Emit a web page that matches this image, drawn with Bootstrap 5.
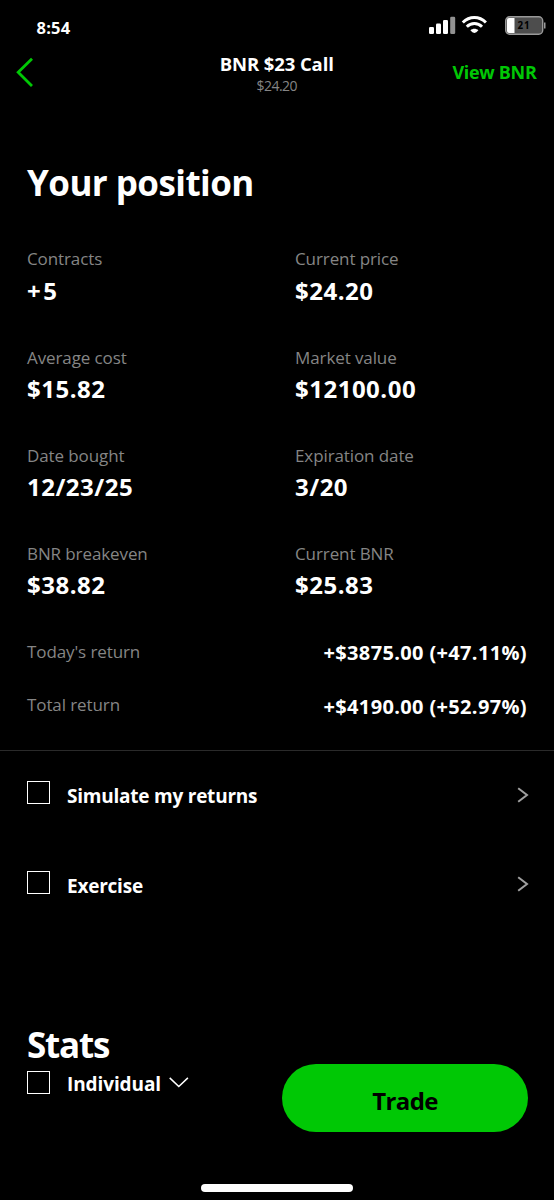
<!DOCTYPE html>
<html lang="en">
<head>
<meta charset="utf-8">
<meta name="viewport" content="width=device-width, initial-scale=1">
<title>BNR $23 Call</title>
<link href="https://cdn.jsdelivr.net/npm/bootstrap@5.3.0/dist/css/bootstrap.min.css" rel="stylesheet">
<style>
body{background:#000;color:#fff;font-family:"Open Sans","Noto Sans",sans-serif;font-weight:700}
svg{display:block;flex:none}
.screen{width:554px;height:1200px;overflow:hidden}
.status{height:46px;padding:0 8px 0 36.5px}
.clock{font-size:16.5px;line-height:26px;letter-spacing:.2px;margin-top:14.5px}
.signals{margin-top:15px}
.topbar{display:grid;grid-template-columns:1fr auto 1fr;height:60px;padding:0 17.500px 0 16px}
.back{margin-top:10.5px}
.title{font-size:18.5px;line-height:26px;letter-spacing:-.1px;margin-top:4.8px;padding-left:1px}
.quote{font-size:14px;line-height:18px;font-weight:400;color:#858585;letter-spacing:-.5px;padding-left:1px;margin-top:.2px}
.view{font-size:18px;line-height:26px;letter-spacing:-.3px;margin-top:13px;color:#00c805}
.content{padding:0 27px}
.big{font-size:35px;line-height:44px;letter-spacing:-.55px}
.heading{margin-top:55.400px}
.stats .big{letter-spacing:-1.2px}
.lab{font-size:17px;line-height:24px;font-weight:400;color:#858585;letter-spacing:-.1px}
.val{font-size:24px;line-height:34px;margin-top:2.3px;letter-spacing:.5px}
.plus{letter-spacing:2.5px}
.facts{display:grid;grid-template-columns:268px 1fr;row-gap:37.9px;margin-top:42px}
.returns{margin-top:22.4px;padding-bottom:17.4px;border-bottom:1px solid #2a2a2a}
.ret{height:53.8px}
.amt{font-size:20px;letter-spacing:.35px;padding-top:2.500px}
.act{height:89.4px;padding-right:25px!important}
.t19{font-size:19px;line-height:26px;letter-spacing:-.23px;padding-top:2px}
.box{width:23px;height:23px;border:1.5px solid #fff;margin:-5px 17px 0 0}
.stats{padding-top:91.2px}
.stats .big{padding-top:2px;margin-bottom:-2px!important}
.stats .t19{letter-spacing:-.1px}
.stats .box{margin-top:-2px}
.account{height:37px}
.trade{width:246px;height:67.5px;margin-top:43.5px;background:#00c805;font-size:24px;letter-spacing:-.6px;border-radius:34px;color:#000;padding-top:13px;margin-right:-1px}
.trade:hover{background:#00b804;color:#000}
.home{width:152.5px;height:8px;margin-top:52px}
</style>
</head>
<body>
<main class="screen d-flex flex-column">
  <div class="status d-flex justify-content-between align-items-start">
    <span class="clock">8:54</span>
    <svg class="signals" width="118" height="22" viewBox="0 0 118 22">
      <g fill="#fff">
        <rect x="1" y="12" width="5" height="7" rx="1.3"/>
        <rect x="8" y="8.5" width="5" height="10.500" rx="1.3"/>
        <rect x="15" y="5" width="5" height="14" rx="1.3"/>
        <rect x="22.200" y="1.700" width="5" height="17.300" rx="1.300" fill="#919191"/>
      </g>
      <g fill="none" stroke="#fff" stroke-width="3">
        <path d="M34.800 7.500C41.500.8 51.200.8 57.900 7.500"/>
        <path d="M38.800 11.700c4.300-4.200 10.900-4.200 15.200 0"/>
      </g>
      <path d="M42.400 15.200c2.300-2 5.700-2 8 0l-2 2.100-2 .7-2-.7z" fill="#fff"/>
      <rect x="77.700" y="1.800" width="37" height="17.500" rx="4" fill="#4d4d4d" stroke="#999" stroke-width="1.400"/>
      <path d="M116 7.500h1.500v6H116z" fill="#999"/>
      <path d="M81 3h5.500v15H81q-2 0-2-2V5q0-2 2-2z" fill="#fff"/>
      <text x="89.500" y="14.200" font-size="9.800" textLength="12" fill="#000">21</text>
    </svg>
  </div>

  <nav class="topbar">
    <svg class="back" width="20" height="31" viewBox="0 0 20 31" fill="none" stroke="#00c805" stroke-width="2.800"><path d="M16 1.700 2.200 15.200 16 28.900"/></svg>
    <div class="text-center">
      <div class="title">BNR $23 Call</div>
      <div class="quote">$24.20</div>
    </div>
    <span class="view text-end">View BNR</span>
  </nav>

  <section class="content">
    <h1 class="big heading fw-bold mb-0">Your position</h1>
    <div class="facts">
      <div><div class="lab">Contracts</div><div class="val"><span class="plus">+</span>5</div></div>
      <div><div class="lab">Current price</div><div class="val">$24.20</div></div>
      <div><div class="lab">Average cost</div><div class="val">$15.82</div></div>
      <div><div class="lab">Market value</div><div class="val">$12100.00</div></div>
      <div><div class="lab">Date bought</div><div class="val">12/23/25</div></div>
      <div><div class="lab">Expiration date</div><div class="val">3/20</div></div>
      <div><div class="lab">BNR breakeven</div><div class="val">$38.82</div></div>
      <div><div class="lab">Current BNR</div><div class="val">$25.83</div></div>
    </div>
  </section>

  <section class="content returns">
    <div class="ret d-flex justify-content-between align-items-center"><span class="lab">Today's return</span><span class="amt">+$3875.00 (+47.11%)</span></div>
    <div class="ret d-flex justify-content-between align-items-center"><span class="lab">Total return</span><span class="amt">+$4190.00 (+52.97%)</span></div>
  </section>

  <section>
    <div class="content act d-flex align-items-center">
      <span class="box"></span><span class="t19">Simulate my returns</span>
      <svg class="ms-auto" width="12" height="17" viewBox="0 0 12 17" fill="none" stroke="#a0a0a0" stroke-width="2"><path d="M1.200 1.200 10 8 1.200 14.800"/></svg>
    </div>
    <div class="content act d-flex align-items-center">
      <span class="box"></span><span class="t19">Exercise</span>
      <svg class="ms-auto" width="12" height="17" viewBox="0 0 12 17" fill="none" stroke="#a0a0a0" stroke-width="2"><path d="M1.200 1.200 10 8 1.200 14.800"/></svg>
    </div>
  </section>

  <section class="content stats d-flex justify-content-between align-items-start">
    <div>
      <h2 class="big fw-bold mb-0">Stats</h2>
      <div class="account d-flex align-items-center">
        <span class="box"></span><span class="t19">Individual</span>
        <svg class="ms-2" width="20" height="12" viewBox="0 0 20 12" fill="none" stroke="#fff" stroke-width="1.500"><path d="M.7.900 9.800 9.500 18.900.900"/></svg>
      </div>
    </div>
    <button class="btn trade fw-bold">Trade</button>
  </section>
  <div class="home bg-white rounded-pill mx-auto"></div>
</main>
<script src="https://cdn.jsdelivr.net/npm/bootstrap@5.3.0/dist/js/bootstrap.bundle.min.js"></script>
</body>
</html>
